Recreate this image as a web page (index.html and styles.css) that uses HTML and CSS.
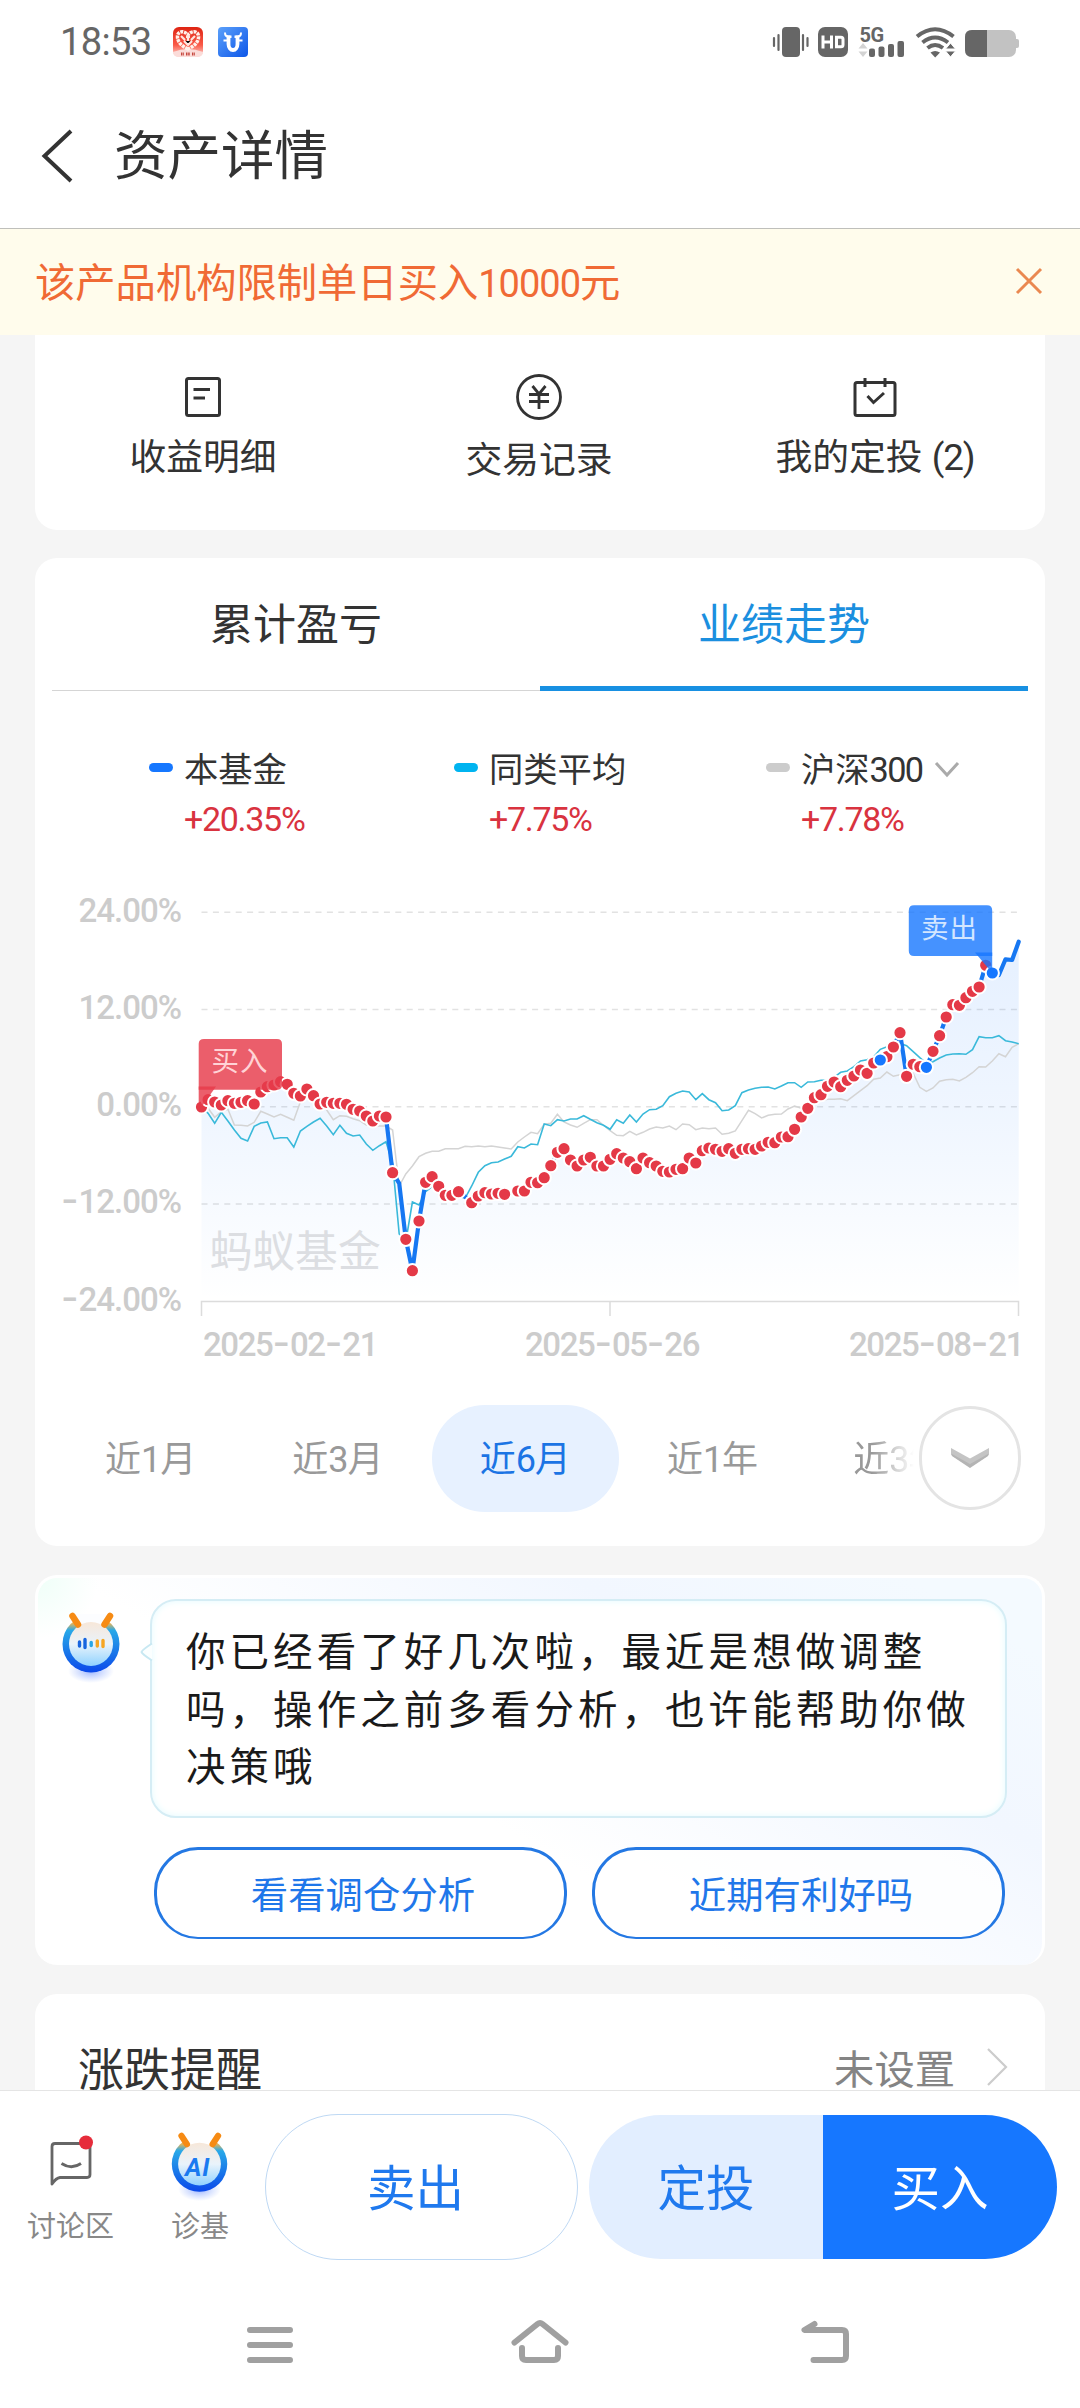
FILE: index.html
```html
<!DOCTYPE html>
<html lang="zh-CN">
<head>
<meta charset="utf-8">
<title>资产详情</title>
<link rel="stylesheet" href="styles.css">
</head>
<body>
<div class="screen">
  <header class="statusbar">
    <span class="clock">18:53</span>
    <svg class="app-icon" width="30" height="30" viewBox="0 0 30 30">
      <defs><linearGradient id="redapp" x1="0" y1="0" x2="0" y2="1"><stop offset="0" stop-color="#de2412"/><stop offset=".6" stop-color="#fa5a48"/><stop offset="1" stop-color="#fde0dc"/></linearGradient></defs>
      <rect width="30" height="30" rx="6" fill="url(#redapp)"/>
      <path d="M0 25Q15 19 30 25V26Q29 30 24 30H6Q1 30 0 26z" fill="#fbdcd9"/>
      <path d="M15 22C8 19 4 14 4.500 9C5 4 11 3 15 8C19 3 25 4 25.500 9C26 14 22 19 15 22z" fill="none" stroke="#fff1ea" stroke-width="3.500" stroke-dasharray="3 .8"/>
      <path d="M8 9l4 4M22 9l-4 4M11 14l4 4 4-4M13 10h4M15 8v6" stroke="#ffe6de" stroke-width="2.200"/>
      <path d="M8 27h3M13 27h4M19 27h3" stroke="#c5483f" stroke-width="3" stroke-dasharray="1.500 .7"/>
    </svg>
    <svg class="app-icon second" width="30" height="30" viewBox="0 0 30 30">
      <defs><linearGradient id="blueapp" x1="0" y1="0" x2="1" y2="1"><stop offset="0" stop-color="#5ba0fa"/><stop offset="1" stop-color="#0d56e8"/></linearGradient></defs>
      <rect width="30" height="30" rx="4" fill="url(#blueapp)"/>
      <path d="M10.500 8.500V17a4.500 6 0 0 0 9 0V8.500" fill="none" stroke="#fff" stroke-width="3.800"/>
      <path d="M9 8.500H13.500V11H9zM16.500 8.500H21V11H16.500z" fill="#fff"/>
      <path d="M10 9.500Q7 9.500 7 5.500M20 9.500Q23 9.500 23 5.500M5.500 13.500h4M20.500 13.500h4" fill="none" stroke="#fff" stroke-width="2"/>
    </svg>
    <svg class="sys" width="248" height="32" viewBox="773 26 248 32" fill="#666">
      <rect x="783" y="27" width="18" height="30" rx="4"/>
      <path d="M775 38v8M779.500 35v15M804 35v15M808.500 38v8" stroke="#666" stroke-width="2.200" stroke-linecap="round"/>
      <rect x="819" y="27" width="30" height="30" rx="7"/>
      <path d="M824 35.500v13M832.500 35.500v13M824 42h8M837.500 37.200h4.500q2 0 2 2v5.500q0 2-2 2h-4.500z" fill="none" stroke="#fff" stroke-width="3"/>
      <text class="five-g" x="860.500" y="41.500">5G</text>
      <path d="M864 43l4.500 5.500h-9zM864 57l4.500-5.500h-9z" fill="#d3d3d3"/>
      <rect x="870" y="48.500" width="6" height="8.500" rx="2"/><rect x="879.500" y="46.500" width="6" height="10.500" rx="2"/><rect x="889" y="44" width="6" height="13" rx="2"/><rect x="898.500" y="41" width="6.500" height="16" rx="2"/>
      <path d="M918 36.500Q936 22 954.500 36.500M923.500 42.500Q936 32.500 949 42.500M928.500 48Q936 42 944 48" fill="none" stroke="#666" stroke-width="4"/>
      <path d="M931.500 52.500Q936 49.500 941 52.500L936.200 57.500z"/>
      <path d="M951.500 43l5 6h-10zM951.500 57l5-6h-10z" stroke="#fff" stroke-width="1"/>
      <rect x="966" y="30" width="51" height="27" rx="7" fill="#c2c2c2"/><rect x="1015" y="39" width="5" height="9" rx="2" fill="#c2c2c2"/>
      <path d="M973 30H988V57H973Q966 57 966 50V37Q966 30 973 30z"/>
    </svg>
  </header>
  <div class="titlebar">
    <svg width="34" height="54" viewBox="0 0 34 54"><path d="M31 2L4.500 27L31 52" fill="none" stroke="#333" stroke-width="4"/></svg>
    <h1>资产详情</h1>
  </div>
  <div class="notice">
    <span>该产品机构限制单日买入<span class="din">10000</span>元</span>
    <svg width="26" height="26" viewBox="0 0 26 26"><path d="M1 1L25 25M25 1L1 25" stroke="#ea8850" stroke-width="3"/></svg>
  </div>

  <main class="content">
    <section class="card actions">
      <div class="action">
        <svg width="46" height="46" viewBox="0 0 46 46" fill="none" stroke="#333" stroke-width="3"><rect x="6.500" y="4.500" width="33" height="37" rx="2"/><path d="M13.500 15.500H30M13.500 24H25"/></svg>
        <span>收益明细</span>
      </div>
      <div class="action mid">
        <svg width="46" height="46" viewBox="0 0 46 46" fill="none" stroke="#333" stroke-width="2.800"><circle cx="23" cy="23" r="21.500"/><path d="M16.500 12L23 20L29.500 12M13 20.500H33M13 27.500H33M23 20V35"/></svg>
        <span>交易记录</span>
      </div>
      <div class="action">
        <svg width="46" height="46" viewBox="0 0 46 46" fill="none" stroke="#333" stroke-width="3"><rect x="3" y="8.500" width="40" height="33" rx="2"/><path d="M13 4V13M33 4V13M15.500 22L21.500 28.500L32 19"/></svg>
        <span>我的定投 <span class="din">(2)</span></span>
      </div>
    </section>

    <section class="card performance">
      <div class="tabs"><span class="tab">累计盈亏</span><span class="tab active">业绩走势</span></div>
      <div class="legend">
        <div class="item"><i class="key fund"></i><div><b>本基金</b><em>+20.35%</em></div></div>
        <div class="item"><i class="key peer"></i><div><b>同类平均</b><em>+7.75%</em></div></div>
        <div class="item"><i class="key index"></i><div><b>沪深<span class="din">300</span><svg width="26" height="18" viewBox="0 0 26 18"><path d="M2 2L13 14L24 2" fill="none" stroke="#aaa" stroke-width="3"/></svg></b><em>+7.78%</em></div></div>
      </div>
      <svg class="chart" width="1010" height="500" viewBox="0 0 1010 500">
        <defs><linearGradient id="fade" gradientUnits="userSpaceOnUse" x1="0" y1="60" x2="0" y2="421"><stop offset="0" stop-color="#1677ff" stop-opacity=".11"/><stop offset=".5" stop-color="#1677ff" stop-opacity=".065"/><stop offset="1" stop-color="#1677ff" stop-opacity="0"/></linearGradient></defs>
        <g class="grid"><path d="M166.500 32.300H983M166.500 129.500H983M166.500 226.800H983M166.500 324H983"/></g>
        <path class="axis" d="M166.500 436V421.500H983.500V436M575 421.500V436"/>
        <g class="label" text-anchor="end">
          <text x="146" y="41.500">24.00%</text><text x="146" y="139">12.00%</text><text x="146" y="236">0.00%</text><text x="146" y="333"><tspan class="dash">-</tspan>12.00%</text><text x="146" y="430.500"><tspan class="dash">-</tspan>24.00%</text>
        </g>
        <g class="label date">
          <text x="168" y="476">2025<tspan class="dash">-</tspan>02<tspan class="dash">-</tspan>21</text>
          <text x="490" y="476">2025<tspan class="dash">-</tspan>05<tspan class="dash">-</tspan>26</text>
          <text x="814" y="476">2025<tspan class="dash">-</tspan>08<tspan class="dash">-</tspan>21</text>
        </g>
        <g id="plot"></g>
        <text class="watermark" x="174.500" y="387">蚂蚁基金</text>
        <path d="M169 159H242Q247 159 247 164V205Q247 209.700 242 209.700H163.700V164Q163.700 159 169 159z" fill="#e63b4a" opacity=".82"/>
        <path d="M163.700 206.500H181L166.500 227L163.700 222z" fill="#e63b4a" opacity=".82"/>
        <text class="flag buy" x="176.500" y="191">买入</text>
        <path d="M879 25.300H952Q957.200 25.300 957.200 30.500V76H879Q873.800 76 873.800 71V30.500Q873.800 25.300 879 25.300z" fill="#1677ff" opacity=".8"/>
        <path d="M940 72.500H957.200V93z" fill="#1677ff" opacity=".8"/>
        <text class="flag sell" x="886" y="58">卖出</text>
      </svg>
      <div class="ranges">
        <span>近<span class="din">1</span>月</span><span>近<span class="din">3</span>月</span><span class="on">近<span class="din">6</span>月</span><span>近<span class="din">1</span>年</span><span class="cut">近<span class="din">3</span>年</span>
        <div class="more"><svg width="38" height="20" viewBox="0 0 38 20"><path d="M0 0L19 10.500L38 0V7L19 19L0 7z" fill="#c4c4c4"/><path d="M1 6L19 16L37 6V8L19 20L1 8z" fill="#b4b4b4"/></svg></div>
      </div>
    </section>

    <section class="card assistant">
      <svg class="bot" width="64" height="76" viewBox="2 2 64 76">
        <defs>
          <linearGradient id="ring" x1="0" y1="0" x2="0" y2="1"><stop offset="0" stop-color="#ffa31a"/><stop offset=".14" stop-color="#e0b45c"/><stop offset=".26" stop-color="#29a9e8"/><stop offset="1" stop-color="#0a48ea"/></linearGradient>
          <linearGradient id="face" x1="0" y1="0" x2="0" y2="1"><stop offset="0" stop-color="#f7e7d9"/><stop offset=".5" stop-color="#e9f3fb"/><stop offset="1" stop-color="#8fd2ff"/></linearGradient>
          <radialGradient id="shade"><stop offset="0" stop-color="#4a78ff" stop-opacity=".55"/><stop offset="1" stop-color="#6f95ff" stop-opacity="0"/></radialGradient>
        </defs>
        <ellipse cx="31" cy="62" rx="23" ry="12" fill="url(#shade)"/>
        <circle cx="31" cy="35" r="28.500" fill="url(#ring)"/>
        <path d="M14 5H48L44 18L40 22H22L18 18z" fill="#fcfdff"/>
        <circle cx="31" cy="35" r="22" fill="url(#face)"/>
        <path d="M12.500 7L18 15.500M50 7L44.500 15.500" stroke="#f68b14" stroke-width="6.500" stroke-linecap="round"/>
        <path d="M19.500 33v4M25 30.500v8" stroke="#1765df" stroke-width="3.400" stroke-linecap="round"/><path d="M31.200 33.500v3" stroke="#28a6e6" stroke-width="3.400" stroke-linecap="round"/><path d="M37.300 32v5M43 31.500v6" stroke="#f5a623" stroke-width="3.400" stroke-linecap="round"/>
      </svg>
      <div class="talk">
        <div class="bubble"><svg class="tail" width="13" height="22" viewBox="0 0 13 22"><path d="M12 2.500Q2 9 1.500 11Q2 13 12 19.500" fill="#fbffff" stroke="#c8e8f2" stroke-width="2"/></svg>你已经看了好几次啦，最近是想做调整<br>吗，操作之前多看分析，也许能帮助你做<br>决策哦</div>
        <div class="replies"><span>看看调仓分析</span><span>近期有利好吗</span></div>
      </div>
    </section>

    <section class="card reminder">
      <span class="name">涨跌提醒</span><span class="state">未设置</span>
      <svg width="22" height="40" viewBox="0 0 22 40"><path d="M2 2L20 20L2 38" fill="none" stroke="#ccc" stroke-width="2.200"/></svg>
    </section>
  </main>

  <footer class="toolbar">
    <div class="tool forum">
      <svg width="50" height="66" viewBox="0 0 50 66"><path d="M6 49V11.500Q6 8.500 9 8.500H41Q44 8.500 44 11.500V39.500Q44 42.500 41 42.500H14Q10 43 6 49z" fill="none" stroke="#666" stroke-width="2.800" stroke-linejoin="round"/><path d="M15.500 28.500Q25.500 35 35 28.500" fill="none" stroke="#666" stroke-width="2.800"/><circle cx="40" cy="7.500" r="7" fill="#e62c3b"/></svg>
      <span>讨论区</span>
    </div>
    <div class="tool doctor">
      <svg width="60" height="72" viewBox="1 1 61 74">
        <ellipse cx="31" cy="61" rx="22" ry="12" fill="url(#shade)"/>
        <circle cx="31" cy="35" r="28.500" fill="url(#ring)"/>
        <path d="M14 5H48L44 18L40 22H22L18 18z" fill="#fff"/>
        <circle cx="31" cy="35" r="22" fill="url(#face)"/>
        <path d="M12.500 6L18 14.500M50 6L44.500 14.500" stroke="#f68b14" stroke-width="6.500" stroke-linecap="round"/>
        <text class="ai" x="16" y="47">AI</text>
      </svg>
      <span>诊基</span>
    </div>
    <div class="btn sell">卖出</div>
    <div class="pair"><div class="btn plan">定投</div><div class="btn purchase">买入</div></div>
  </footer>
  <nav class="sysnav">
    <svg width="46" height="38" viewBox="0 0 46 38" stroke="#a0a0a0" stroke-width="6" stroke-linecap="round"><path d="M3 4H43M3 19H43M3 34H43"/></svg>
    <svg width="58" height="46" viewBox="0 0 58 46" fill="none" stroke="#a0a0a0" stroke-width="6" stroke-linecap="round" stroke-linejoin="round"><path d="M3.500 25.500L26.500 7Q29 5 31.500 7L54.500 25.500M11 31V39Q11 43 15 43H43Q47 43 47 39V31"/></svg>
    <svg width="48" height="44" viewBox="0 0 48 44" fill="none" stroke="#a0a0a0" stroke-width="6" stroke-linecap="round" stroke-linejoin="round"><path d="M13.500 4L3.500 10H41Q45 10 45 14V36Q45 40 41 40H12.500"/></svg>
  </nav>
</div>
<script src="chart.js"></script>
</body>
</html>
```

FILE: styles.css
```css
* { box-sizing: border-box; }
body { margin: 0; background: #fff; font-family: Roboto, "Noto Sans CJK SC", sans-serif; color: #333; }
svg { display: block; flex: none; overflow: visible; }
.screen { width: 1080px; height: 2408px; display: flex; flex-direction: column; overflow: hidden; }
.din { font-family: Roboto, sans-serif; letter-spacing: -0.03em; }

.statusbar { height: 84px; display: flex; align-items: center; padding: 0 60px 0 60px; flex: none; }
.clock { font-size: 38px; color: #666; width: 113px; letter-spacing: -.6px; white-space: nowrap; }
.app-icon.second { margin-left: 15px; }
.sys { margin-left: auto; }
.five-g { font: 700 20px Roboto, sans-serif; letter-spacing: -.5px; }

.titlebar { height: 145px; flex: none; display: flex; align-items: center; padding: 0 0 0 40px; border-bottom: 1px solid #bfbfbb; }
.titlebar h1 { margin: 2px 0 0 40px; font-size: 53.500px; font-weight: 400; line-height: 70px; }

.notice { height: 106px; flex: none; background: #fffcec; display: flex; align-items: center; justify-content: space-between; padding: 0 38px 2px 35px; color: #f06a35; font-size: 40.300px; line-height: 60px; }
.notice > span { padding-top: 5px; }
.notice .din { font-size: 38px; letter-spacing: -1px; }

.content { height: 1755px; flex: none; overflow: hidden; background: #f5f5f5; padding: 0 35px; display: flex; flex-direction: column; }
.card { background: #fff; border-radius: 22px; flex: none; }
.actions { height: 195px; border-radius: 0 0 22px 22px; display: grid; grid-template-columns: repeat(3, 1fr); padding: 39px 2px 0 0; margin-bottom: 28px; }
.action { display: flex; flex-direction: column; align-items: center; font-size: 36.800px; line-height: 50px; gap: 13px; white-space: pre; }
.action.mid { gap: 16px; }

.performance { height: 988px; margin-bottom: 29px; display: flex; flex-direction: column; }
.tabs { display: grid; grid-template-columns: 1fr 1fr; margin: 0 17px; height: 133px; border-bottom: 1px solid #d5d5d5; flex: none; }
.tab { text-align: center; font-size: 43px; line-height: 135px; height: 133px; color: #333; }
.tab.active { color: #1b8fdf; border-bottom: 5px solid #1890e2; }
.legend { display: grid; grid-template-columns: 305px 312px 1fr; padding: 57px 0 0 114px; height: 189px; flex: none; }
.item { display: flex; gap: 11px; }
.key { width: 24px; height: 9px; border-radius: 4.500px; margin-top: 15px; }
.key.fund { background: #1677ff; }
.key.peer { background: #00b4f0; }
.key.index { background: #ccc; }
.item b { display: flex; align-items: center; font-weight: 400; font-size: 34.300px; line-height: 44px; white-space: nowrap; }
.item b .din { letter-spacing: -1.700px; }
.item b svg { margin-left: 12px; }
.item em { display: block; font-style: normal; font-size: 34px; line-height: 44px; margin-top: 5px; color: #d9333f; letter-spacing: -1.300px; }
.chart { flex: none; }
.grid path { stroke: #e2e2e2; stroke-width: 1.500; stroke-dasharray: 6 5.400; fill: none; }
.axis { stroke: #dcdcdc; stroke-width: 1.500; fill: none; }
.label text { font: 500 33px Roboto, sans-serif; fill: #ccc; letter-spacing: -1px; }
.label.date text { letter-spacing: -1.400px; }
.label .dash { font-family: Inter, sans-serif; font-weight: 500; font-size: 38px; letter-spacing: 0; }
.watermark { font: 400 42.800px "Noto Sans CJK SC", sans-serif; fill: #dcdee2; }
.flag { font: 400 27.500px "Noto Sans CJK SC", sans-serif; letter-spacing: 1px; }
.flag.buy { fill: #ffd3d6; }
.flag.sell { fill: #d3e6ff; }
.line-index { fill: none; stroke: #d4d4d4; stroke-width: 1.500; }
.line-peer { fill: none; stroke: #3ab9da; stroke-width: 1.600; }
.line-fund { fill: none; stroke: #1677f2; stroke-width: 4.200; stroke-linejoin: round; stroke-linecap: round; }
.trade { stroke: #fff; stroke-width: 2; fill: #e43947; }
.trade.out { fill: #1677ff; }

.ranges { position: relative; display: flex; padding-left: 22px; margin-top: 25px; height: 107px; color: #999; font-size: 36px; line-height: 111px; }
.ranges > span { width: 187.300px; height: 107px; text-align: center; border-radius: 53px; white-space: nowrap; }
.ranges .on { background: #e7f1ff; color: #1b74e4; }
.ranges .cut { width: 112px; text-align: left; padding-left: 47px; overflow: hidden; border-radius: 0; -webkit-mask-image: linear-gradient(90deg, #000 66px, transparent 108px); mask-image: linear-gradient(90deg, #000 66px, transparent 108px); }
.more { position: absolute; left: 884px; top: 1px; width: 102px; height: 104px; border-radius: 52px; border: 3px solid #e4e4e4; background: #fff; display: flex; align-items: center; justify-content: center; }

.assistant { height: 390px; margin-bottom: 29px; border: 3px solid #fff; border-bottom-width: 0; background: radial-gradient(circle at 0 0, #effff8 0, rgba(250,255,253,0) 60px), linear-gradient(30deg, #fff 42%, #f2f7ff 72%, #f4faff 92%); display: flex; padding: 21px 0 0 24px; }
.bot { margin: 12px 26px 0 0; }
.bubble { position: relative; width: 857px; height: 219px; border: 2px solid #d5edf5; border-radius: 26px; background: #fff; box-shadow: inset 0 0 7px #e3fbff; padding: 23px 0 0 34px; font-size: 39.500px; line-height: 57.500px; letter-spacing: 4.050px; color: #1a1a1a; white-space: nowrap; margin-left: -2px; }
.tail { position: absolute; left: -12px; top: 40px; }
.replies { display: flex; gap: 25px; margin: 29px 0 0 2px; }
.replies span { width: 413px; height: 92px; border: 3px solid #2478e3; border-bottom-width: 2px; border-radius: 44px; text-align: center; font-size: 37.400px; line-height: 92px; padding-left: 5px; color: #1f77ea; background: rgba(255,255,255,.75); }

.reminder { height: 150px; display: flex; align-items: center; padding: 0 37px 6px 43px; }
.name { font-size: 46px; }
.state { font-size: 40.300px; color: #848484; margin: 0 31px 0 auto; }
.reminder svg { margin-top: 2px; }

.toolbar { height: 197px; flex: none; border-top: 1px solid #e5e5e5; background: #fff; display: flex; align-items: flex-start; padding: 24px 23px 0 27px; }
.tool { display: flex; flex-direction: column; align-items: center; font-size: 29px; line-height: 40px; color: #888; }
.forum { width: 87px; }
.forum svg { margin-top: 20px; margin-bottom: 6px; }
.doctor { width: 62px; margin-left: 55px; }
.doctor svg { margin-top: 16px; margin-bottom: 4px; }
.ai { font: italic 700 26px Roboto, sans-serif; fill: #1a7af0; letter-spacing: 1px; }
.btn { font-size: 48.500px; line-height: 150px; text-align: center; }
.sell.btn { width: 313px; height: 146px; border: 1px solid #bfd9f4; border-radius: 73px; color: #1f79ee; margin-left: 34px; margin-top: -1px; padding-right: 12px; }
.pair { margin: 0 0 0 auto; width: 468px; height: 144px; display: flex; border-radius: 72px; overflow: hidden; }
.pair .btn { width: 234px; height: 144px; }
.plan { background: #e2eeff; color: #1f79ee; }
.purchase { background: #1677ff; color: #fff; }
.sysnav { height: 121px; flex: none; display: flex; align-items: flex-start; padding: 37px 0 0 247px; }
.sysnav svg { margin-top: 2px; }
.sysnav svg:nth-child(2) { margin: -7px 0 0 218px; }
.sysnav svg:nth-child(3) { margin: -4px 0 0 232px; }
```

FILE: chart.js
```js
// Daily closing positions, in thirds of a pixel below the top of the plot.
const fund = [681,659,666,675,662,670,667,662,672,636,620,615,605,613,640,648,627,647,672,667,670,670,673,688,693,708,723,708,711,878,910,1078,1172,1023,907,890,919,946,946,935,950,968,948,938,942,940,943,940,933,933,907,908,893,857,817,806,840,858,840,832,858,858,838,821,834,845,866,834,848,858,874,876,868,866,834,849,812,804,808,814,806,820,808,806,808,798,787,788,771,770,748,711,685,653,644,619,606,620,601,588,570,580,549,540,530,501,458,589,553,560,562,514,467,411,374,376,353,334,321,256,279,285,238,240,185];
const peer = [681,700,730,697,723,750,775,783,739,729,726,776,773,773,801,753,739,726,715,738,764,736,760,768,765,792,811,797,785,850,1062,1085,966,975,935,920,935,950,950,948,955,918,877,857,848,846,837,829,800,804,792,794,732,737,719,723,717,717,707,718,728,736,748,719,730,705,726,702,689,688,677,650,640,633,636,659,641,659,668,692,690,677,638,630,625,622,621,627,618,608,608,622,606,605,601,600,592,577,573,560,543,539,530,508,500,500,490,497,515,533,550,545,534,525,522,521,523,509,470,473,473,467,482,486,491];
const index300 = [681,685,712,695,688,735,736,738,727,694,702,711,703,712,721,665,655,665,668,690,719,707,709,716,722,735,738,738,738,750,918,882,858,830,820,814,814,806,806,806,799,800,798,800,798,801,804,807,786,771,757,761,733,730,703,726,735,742,730,719,719,736,752,766,767,754,765,757,747,741,744,738,749,732,734,749,744,746,744,763,760,753,722,691,701,714,706,703,702,687,678,685,675,668,662,658,658,656,662,647,632,617,598,594,576,589,584,580,580,622,634,624,604,599,598,603,592,578,560,561,543,521,530,502,491];
const noTrade = new Set([30, 40, 47, 121, 122, 123, 124]);
const sells = new Set([103, 110, 120]);
const x = i => (166.5 + 6.59 * i).toFixed(1);
const y = v => (v / 3).toFixed(1);
const line = s => 'M' + s.map((v, i) => x(i) + ' ' + y(v)).join('L');
const dot = (v, i) => noTrade.has(i) ? '' :
  `<circle class="trade${sells.has(i) ? ' out' : ''}" cx="${x(i)}" cy="${y(v)}" r="6.600"/>`;
let out = `<path fill="url(#fade)" d="${line(fund)}V421.500H166.500z"/>`;
out += `<path class="line-index" d="${line(index300)}"/><path class="line-peer" d="${line(peer)}"/><path class="line-fund" d="${line(fund)}"/>`;
// Sale markers go on top of the neighbouring purchases.
out += fund.map((v, i) => sells.has(i) ? '' : dot(v, i)).join('');
out += fund.map((v, i) => sells.has(i) ? dot(v, i) : '').join('');
document.getElementById('plot').innerHTML = out;
```
